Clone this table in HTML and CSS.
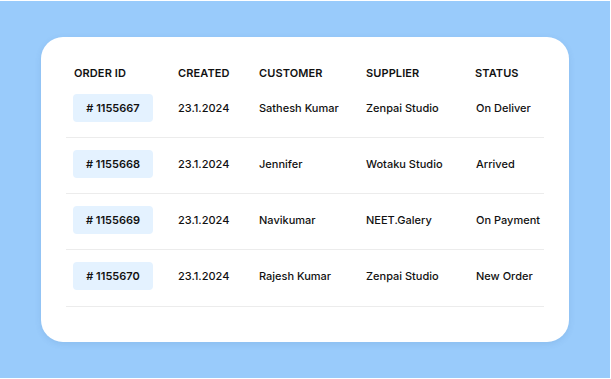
FILE: index.html
```html
<!DOCTYPE html>
<html>
<head>
<meta charset="utf-8">
<link rel="stylesheet" href="styles.css">
</head>
<body>
<div class="stage">
  <div class="card">
    <div class="table">
      <div class="row head">
        <div class="cell">ORDER ID</div>
        <div class="cell">CREATED</div>
        <div class="cell">CUSTOMER</div>
        <div class="cell">SUPPLIER</div>
        <div class="cell">STATUS</div>
      </div>
      <div class="row body">
        <div class="cell"><span class="badge"># 1155667</span></div>
        <div class="cell">23.1.2024</div>
        <div class="cell">Sathesh Kumar</div>
        <div class="cell">Zenpai Studio</div>
        <div class="cell">On Deliver</div>
      </div>
      <div class="row body">
        <div class="cell"><span class="badge"># 1155668</span></div>
        <div class="cell">23.1.2024</div>
        <div class="cell">Jennifer</div>
        <div class="cell">Wotaku Studio</div>
        <div class="cell">Arrived</div>
      </div>
      <div class="row body">
        <div class="cell"><span class="badge"># 1155669</span></div>
        <div class="cell">23.1.2024</div>
        <div class="cell">Navikumar</div>
        <div class="cell">NEET.Galery</div>
        <div class="cell">On Payment</div>
      </div>
      <div class="row body">
        <div class="cell"><span class="badge"># 1155670</span></div>
        <div class="cell">23.1.2024</div>
        <div class="cell">Rajesh Kumar</div>
        <div class="cell">Zenpai Studio</div>
        <div class="cell">New Order</div>
      </div>
    </div>
  </div>
</div>
</body>
</html>
```
FILE: styles.css
```css
html, body {
  margin: 0;
  padding: 0;
  background: #ffffff;
}
body {
  font-family: "Inter", "Noto Sans", sans-serif;
  color: #111111;
}
.stage {
  margin-top: 1px;
  width: 610px;
  height: 377px;
  background: #99cbfb;
  box-sizing: border-box;
  padding: 36px 0 0 41px;
}
.card {
  width: 528px;
  height: 305px;
  background: #ffffff;
  border-radius: 22px;
  box-shadow: 0 2px 6px rgba(40, 90, 150, 0.12);
  box-sizing: border-box;
  padding: 27px 25px 0 25px;
}
.row {
  display: grid;
  grid-template-columns: 105px 81px 107px 109px 1fr;
  padding-left: 7px;
  align-items: center;
  font-size: 11px;
  font-weight: 500;
}
.head {
  height: 18px;
  font-weight: 600;
  letter-spacing: 0.1px;
}
.head .cell:first-child { padding-left: 1px; }
.body {
  height: 56px;
  border-bottom: 1px solid #ececec;
  box-sizing: border-box;
  padding-top: 12px;
  align-items: start;
}
.body:first-of-type { height: 57px; }
.body:last-child { height: 57px; }
.body .cell {
  height: 28px;
  line-height: 28px;
}
.badge {
  display: inline-block;
  width: 80px;
  height: 28px;
  line-height: 28px;
  text-align: center;
  background: #e4f2ff;
  border-radius: 4px;
  font-weight: 600;
}
.body .cell:nth-child(5) { padding-left: 1px; }
```
